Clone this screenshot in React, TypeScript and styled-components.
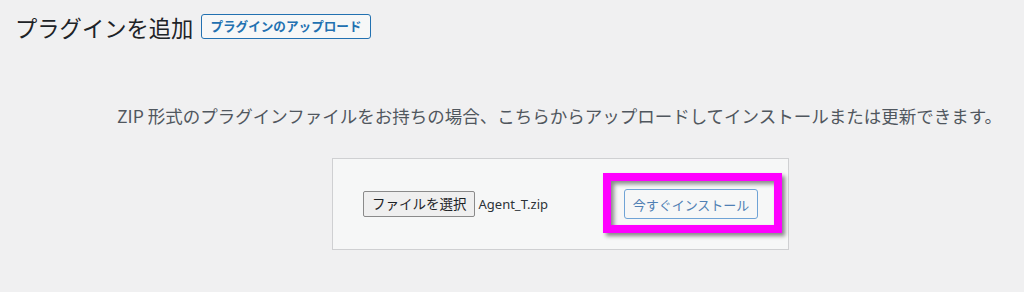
import React from "react";
import styled, { createGlobalStyle } from "styled-components";

const GlobalStyle = createGlobalStyle`
  html, body {
    margin: 0;
    padding: 0;
    background: #f0f0f1;
  }
  body {
    width: 1024px;
    height: 292px;
    overflow: hidden;
    font-family: "Noto Sans", "Noto Sans CJK JP", sans-serif;
    color: #1d2327;
  }
`;

const Page = styled.div`
  display: flex;
  flex-direction: column;
`;

const Header = styled.header`
  display: flex;
  align-items: center;
  gap: 8px;
  padding: 12px 0 0 15px;
  height: 30px;
`;

const Title = styled.h1`
  margin: 0;
  font-family: "Noto Sans CJK JP", sans-serif;
  font-size: 22.3px;
  font-weight: 400;
  line-height: 30px;
  color: #1d2327;
`;

const PageTitleAction = styled.a`
  display: inline-flex;
  align-items: center;
  height: 25px;
  box-sizing: border-box;
  padding: 0 8px;
  border: 1px solid #2271b1;
  border-radius: 3px;
  background: #f6f7f7;
  color: #2271b1;
  font-family: "Noto Sans CJK JP", sans-serif;
  font-size: 12.6px;
  font-weight: 700;
  text-decoration: none;
  line-height: 1;
  margin-top: -1px;
`;

const UploadSection = styled.section`
  display: flex;
  flex-direction: column;
  align-items: center;
  padding-left: 92px;
  margin-top: 62px;
`;

const Help = styled.p`
  margin: 0;
  padding-left: 3px;
  font-family: "Noto Sans CJK JP", sans-serif;
  font-size: 17.5px;
  line-height: 24px;
  color: #50575e;
  white-space: nowrap;
`;

const UploadForm = styled.form`
  margin: 30px 0 0 5px;
  width: 395px;
  padding: 30px;
  border: 1px solid #cfd0d2;
  background: #f6f7f7;
  display: flex;
  align-items: center;
  justify-content: space-between;
`;

const FilePicker = styled.div`
  display: flex;
  align-items: center;
  gap: 4px;
  flex: 1;
  min-width: 0;
`;

const FileButton = styled.button`
  height: 26px;
  box-sizing: border-box;
  padding: 0 7px 0 8px;
  border: 1px solid #8a8a8a;
  border-radius: 2px;
  background: #efefef;
  color: #1d2327;
  font-family: "Noto Sans CJK JP", sans-serif;
  font-size: 13.5px;
  line-height: 1;
  white-space: nowrap;
`;

const FileName = styled.span`
  font-family: "Noto Sans", sans-serif;
  font-size: 13px;
  color: #2c3338;
  white-space: nowrap;
`;

const Highlighted = styled.div`
  position: relative;
  display: flex;
  flex-shrink: 0;
`;

const InstallButton = styled.button`
  width: 134px;
  height: 30px;
  box-sizing: border-box;
  padding: 0;
  border: 1px solid #6fa3d6;
  border-radius: 3px;
  background: #f6f7f7;
  color: #4f80b4;
  font-family: "Noto Sans CJK JP", sans-serif;
  font-size: 13px;
  line-height: 1;
  white-space: nowrap;
`;

const Marker = styled.span`
  position: absolute;
  top: -16px;
  left: -21px;
  right: -24px;
  bottom: -14px;
  border: 8px solid #ff00ff;
  box-shadow: 3px 3px 4px rgba(0, 0, 0, 0.45),
    inset 3px 3px 4px rgba(0, 0, 0, 0.45);
  pointer-events: none;
`;

export default function App() {
  return (
    <>
      <GlobalStyle />
      <Page>
        <Header>
          <Title>プラグインを追加</Title>
          <PageTitleAction href="#">プラグインのアップロード</PageTitleAction>
        </Header>
        <UploadSection>
          <Help>
            ZIP 形式のプラグインファイルをお持ちの場合、こちらからアップロードしてインストールまたは更新できます。
          </Help>
          <UploadForm onSubmit={(e) => e.preventDefault()}>
            <FilePicker>
              <FileButton type="button">ファイルを選択</FileButton>
              <FileName>Agent_T.zip</FileName>
            </FilePicker>
            <Highlighted>
              <InstallButton type="submit">今すぐインストール</InstallButton>
              <Marker />
            </Highlighted>
          </UploadForm>
        </UploadSection>
      </Page>
    </>
  );
}
